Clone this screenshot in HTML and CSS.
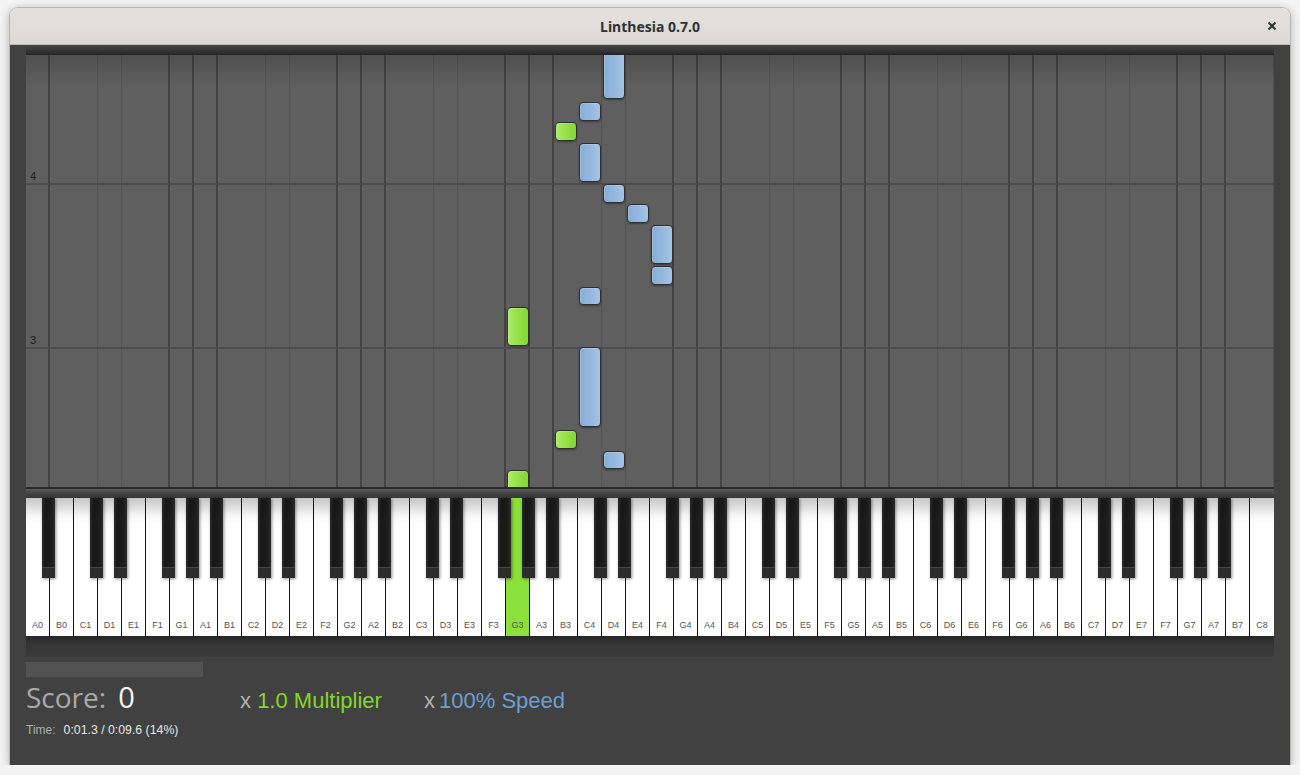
FILE: index.html
```html
<!DOCTYPE html>
<html>
<head>
<meta charset="utf-8">
<title>Linthesia 0.7.0</title>
<link rel="stylesheet" href="styles.css">
</head>
<body>
<div class="window">
  <div class="titlebar">
    <span class="title">Linthesia 0.7.0</span>
    <svg class="close" width="10" height="10" viewBox="0 0 10 10"><path d="M1.5 1.5L8.5 8.5M8.5 1.5L1.5 8.5" stroke="#2e3436" stroke-width="2"/></svg>
  </div>
  <div class="content">
    <div class="topbar"></div>
    <div class="notes">
      <span class="beat" style="top:115px">4</span>
      <span class="beat" style="top:279px">3</span>
      <div class="note blue d4" style="top:-10px;height:54px"></div>
      <div class="note blue c4" style="top:47px;height:19px"></div>
      <div class="note green b3" style="top:67px;height:19px"></div>
      <div class="note blue c4" style="top:88px;height:39px"></div>
      <div class="note blue d4" style="top:129px;height:19px"></div>
      <div class="note blue e4" style="top:149px;height:19px"></div>
      <div class="note blue f4" style="top:170px;height:39px"></div>
      <div class="note blue f4" style="top:211px;height:19px"></div>
      <div class="note blue c4" style="top:232px;height:18px"></div>
      <div class="note green g3" style="top:252px;height:39px"></div>
      <div class="note blue c4" style="top:292px;height:80px"></div>
      <div class="note green b3" style="top:375px;height:19px"></div>
      <div class="note blue d4" style="top:396px;height:18px"></div>
      <div class="note green g3" style="top:415px;height:40px"></div>
    </div>
    <div class="kbtop"></div>
    <div class="keyboard">
      <div class="wk b">A0</div><div class="wk">B0</div>
      <div class="wk b">C1</div><div class="wk b">D1</div><div class="wk">E1</div><div class="wk b">F1</div><div class="wk b">G1</div><div class="wk b">A1</div><div class="wk">B1</div>
      <div class="wk b">C2</div><div class="wk b">D2</div><div class="wk">E2</div><div class="wk b">F2</div><div class="wk b">G2</div><div class="wk b">A2</div><div class="wk">B2</div>
      <div class="wk b">C3</div><div class="wk b">D3</div><div class="wk">E3</div><div class="wk b">F3</div><div class="wk b on">G3</div><div class="wk b">A3</div><div class="wk">B3</div>
      <div class="wk b">C4</div><div class="wk b">D4</div><div class="wk">E4</div><div class="wk b">F4</div><div class="wk b">G4</div><div class="wk b">A4</div><div class="wk">B4</div>
      <div class="wk b">C5</div><div class="wk b">D5</div><div class="wk">E5</div><div class="wk b">F5</div><div class="wk b">G5</div><div class="wk b">A5</div><div class="wk">B5</div>
      <div class="wk b">C6</div><div class="wk b">D6</div><div class="wk">E6</div><div class="wk b">F6</div><div class="wk b">G6</div><div class="wk b">A6</div><div class="wk">B6</div>
      <div class="wk b">C7</div><div class="wk b">D7</div><div class="wk">E7</div><div class="wk b">F7</div><div class="wk b">G7</div><div class="wk b">A7</div><div class="wk">B7</div>
      <div class="wk">C8</div>
    </div>
    <div class="kbbottom"></div>
    <div class="progress"></div>
    <div class="stats">
      <div class="scorebox"><span class="score-label">Score:</span><span class="score">0</span></div>
      <div class="mult"><span class="x">x </span><span class="green-text">1.0 Multiplier</span></div>
      <div class="speed"><span class="x xs">x</span><span class="blue-text">100% Speed</span></div>
    </div>
    <div class="time"><span class="time-label">Time:</span><span class="time-value">0:01.3 / 0:09.6 (14%)</span></div>
  </div>
</div>
</body>
</html>
```
FILE: styles.css
```css
html, body {
  margin: 0;
  padding: 0;
}
body {
  background: #f4f4f4;
  font-family: "Liberation Sans", Arial, sans-serif;
  overflow: hidden;
}
.window {
  margin: 7px 0 0 9px;
  width: 1280px;
  border: 1px solid #b9b6b2;
  border-bottom: none;
  border-radius: 9px 9px 0 0;
  box-shadow: 0 2px 10px rgba(0, 0, 0, 0.28);
  overflow: hidden;
}
.titlebar {
  position: relative;
  height: 36px;
  background: linear-gradient(#e3e0dd, #dddad6);
  border-bottom: 1px solid #c0bcb7;
  display: flex;
  align-items: center;
  justify-content: center;
}
.title {
  font-family: "Noto Sans", "DejaVu Sans", sans-serif;
  font-weight: 700;
  font-size: 14px;
  color: #2e3436;
}
.close {
  position: absolute;
  right: 13px;
  top: 13px;
}
.content {
  height: 720px;
  box-sizing: border-box;
  padding: 0 16px;
  background: #414141;
}
.topbar {
  height: 10px;
  background: linear-gradient(#474747, #2f2f2f 75%, #222);
}
.notes {
  position: relative;
  height: 432px;
  overflow: hidden;
  background-color: #5f5f5f;
  background-image:
    linear-gradient(rgba(0, 0, 0, 0.16), rgba(0, 0, 0, 0)),
    linear-gradient(to bottom, transparent 128px, #4d4d4d 128px, #4d4d4d 130px, transparent 130px),
    linear-gradient(to right,
      transparent 23px, #535353 23px, #535353 24px, transparent 24px,
      transparent 47px, #535353 47px, #535353 48px, transparent 48px,
      transparent 94px, #434343 94px, #434343 96px, transparent 96px,
      transparent 118px, #434343 118px, #434343 120px, transparent 120px,
      transparent 142px, #434343 142px, #434343 144px, transparent 144px);
  background-size: 100% 32px, 100% 164px, 168px 100%;
  background-position: 0 0, 0 0, 48px 0;
  background-repeat: no-repeat, repeat-y, repeat-x;
}
.beat {
  position: absolute;
  left: 4px;
  font-size: 11px;
  line-height: 13px;
  color: #1e1e1e;
}
.note {
  position: absolute;
  width: 22px;
  box-sizing: border-box;
  border: 1.5px solid #2f2f2f;
  border-radius: 4px;
  box-shadow: 0 1px 2px rgba(0, 0, 0, 0.35);
}
.note.blue {
  background: linear-gradient(to right, #86acd7, #a4c3e6);
  box-shadow: inset 1px 1px 0 rgba(255, 255, 255, 0.2), 0 1px 2px rgba(0, 0, 0, 0.35);
}
.note.green {
  background: linear-gradient(to right, #a9ec66, #8ddc3e 70%, #86d636);
  box-shadow: inset 1px 1px 0 rgba(255, 255, 255, 0.2), 0 1px 2px rgba(0, 0, 0, 0.35);
}
.g3 { left: 481px; }
.b3 { left: 529px; }
.c4 { left: 553px; }
.d4 { left: 577px; }
.e4 { left: 601px; }
.f4 { left: 625px; }

.kbtop {
  height: 11px;
  background: linear-gradient(#2a2a2a 0, #2a2a2a 2px, #5c5c5c 2px, #4a4a4a 5px, #363636);
}
.keyboard {
  display: flex;
  height: 138px;
}
.wk {
  position: relative;
  flex: none;
  width: 24px;
  box-sizing: border-box;
  border-right: 1px solid #111;
  background: linear-gradient(#c6c6c6, #f6f6f6 18px, #fff 26px);
  display: flex;
  align-items: flex-end;
  justify-content: center;
  padding-bottom: 6px;
  font-size: 9px;
  line-height: 10px;
  color: #555;
}
.wk:last-child {
  border-right: none;
}
.wk.on {
  background: #8be03b;
}
.wk.b::after {
  content: "";
  position: absolute;
  z-index: 1;
  top: 0;
  left: 16px;
  width: 13px;
  height: 80px;
  background:
    linear-gradient(to bottom, transparent 69px, #454545 69px, #454545 70px, #2c2c2c 70px),
    linear-gradient(to right, #2c2c2c, #171717 25%, #1c1c1c 75%, #2c2c2c);
  box-shadow: 1px 1px 3px rgba(0, 0, 0, 0.45);
}
.kbbottom {
  height: 21px;
  background: linear-gradient(#272727, #363636 40%, #3c3c3c);
}
.progress {
  margin-top: 5px;
  width: 177px;
  height: 15px;
  background: #525252;
}
.stats {
  display: flex;
  align-items: baseline;
  height: 40px;
  margin-top: 0;
}
.scorebox {
  width: 214px;
  flex: none;
}
.score-label {
  font-family: "Open Sans", sans-serif;
  font-size: 28px;
  color: #a9a9a9;
}
.score {
  font-family: "Open Sans", sans-serif;
  font-size: 29px;
  color: #f4f4f4;
  margin-left: 12px;
}
.mult {
  width: 184px;
  flex: none;
  font-size: 22px;
}
.speed {
  font-size: 22px;
}
.x {
  color: #b2b2b2;
}
.xs {
  margin-right: 4px;
}
.green-text {
  color: #84d62e;
}
.blue-text {
  color: #6d9ed1;
}
.time {
  margin-top: 4px;
  line-height: 16px;
}
.time-label {
  font-size: 12px;
  color: #adadad;
}
.time-value {
  margin-left: 8px;
  font-size: 12.3px;
  color: #e6e6e6;
}
```
